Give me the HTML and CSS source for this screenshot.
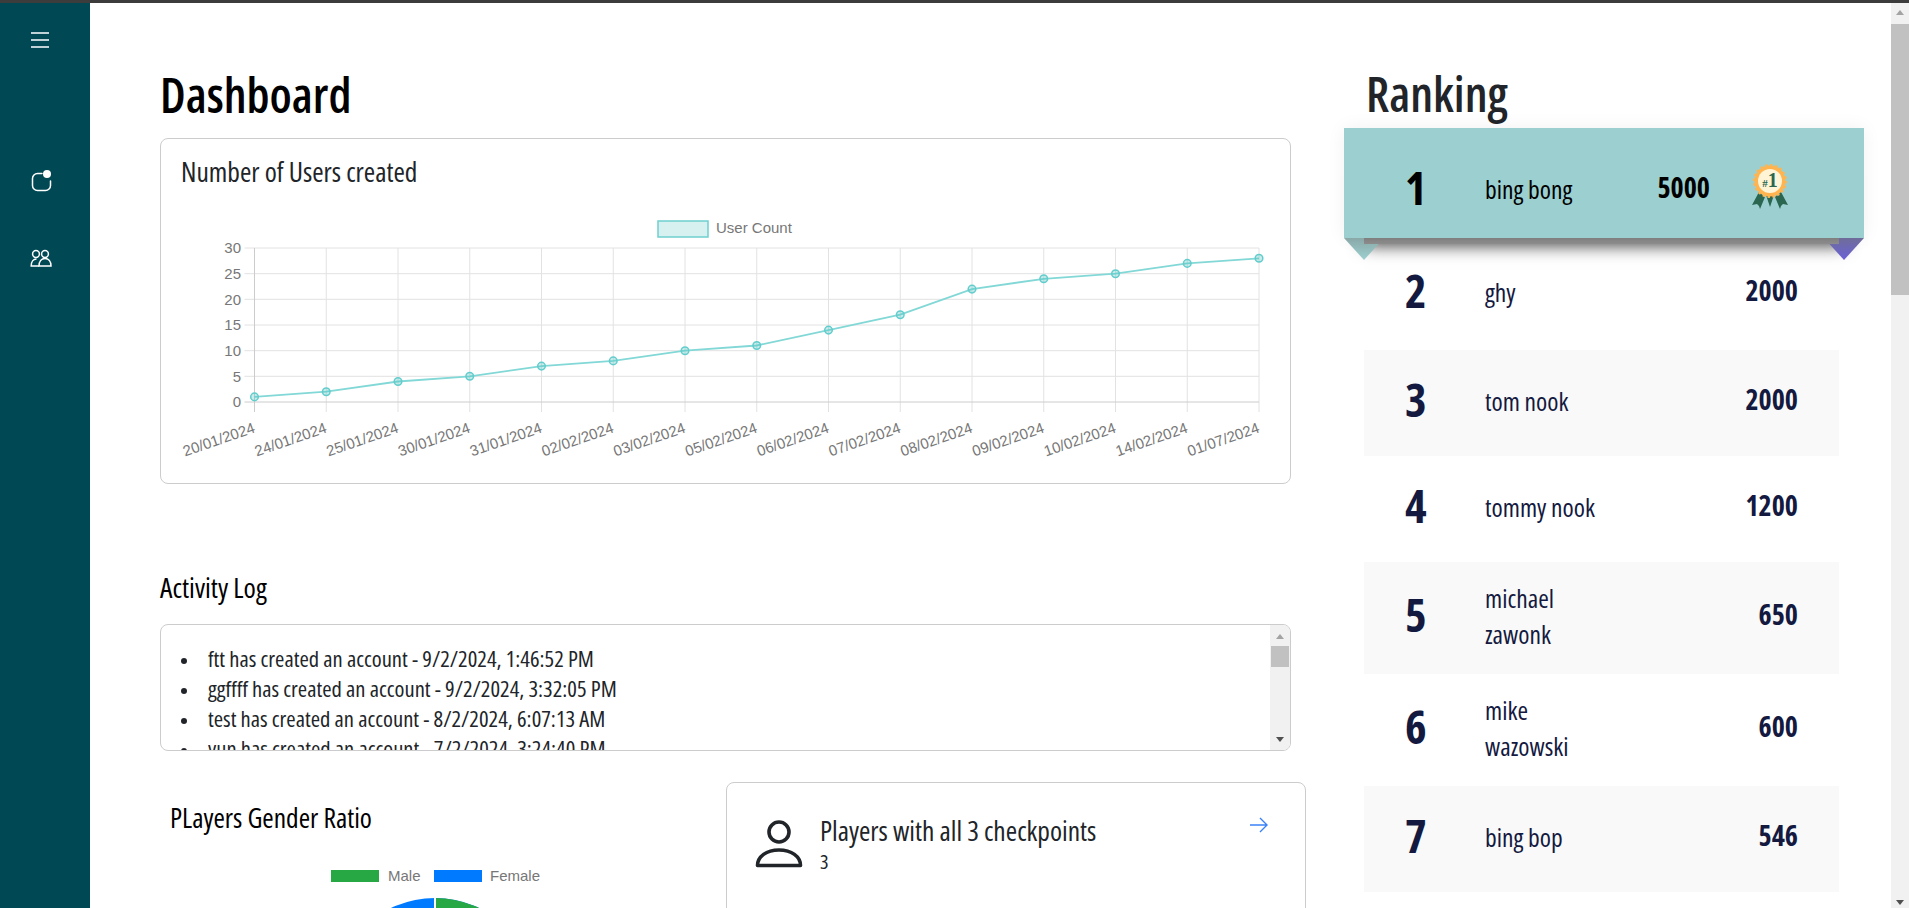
FILE: index.html
```html
<!DOCTYPE html>
<html>
<head>
<title>Dashboard</title>
<link rel="stylesheet" href="styles.css">
</head>
<body>
<div class="topline"></div>
<div class="app">
  <nav class="side">
    <a class="side-btn menu-btn" href="#">
      <svg width="18" height="16" viewBox="0 0 18 16"><path d="M0 1h18M0 8h18M0 15h18" stroke="#fff" stroke-width="1.6" stroke-linecap="round"/></svg>
    </a>
    <a class="side-btn notif-btn" href="#">
      <svg width="24" height="24" viewBox="0 0 24 24"><path d="M12 4.500H7.500a5 5 0 0 0-5 5v7a5 5 0 0 0 5 5h8a5 5 0 0 0 5-5V12" fill="none" stroke="#fff" stroke-width="1.5" stroke-linecap="round"/><circle cx="17" cy="5" r="4" fill="#fff"/></svg>
    </a>
    <a class="side-btn people-btn" href="#">
      <svg width="22" height="18" viewBox="0 0 22 18"><g fill="none" stroke="#fff" stroke-width="1.5"><circle cx="6" cy="5" r="3.400"/><circle cx="15" cy="5" r="3.400"/><path d="M9 17H1.200c0-4 2-7 5.300-7"/><path d="M9 17c0-4.500 2.500-7.500 6-7.500s6 3 6 7.500z"/></g></svg>
    </a>
  </nav>

  <main class="content">
    <section class="dash">
      <h1 class="dash-title">Dashboard</h1>

      <div class="card chart-card">
        <h3 class="card-title">Number of Users created</h3>
        <svg class="chart" width="1129" height="278" viewBox="161 205 1129 278">
          <g class="grid">
            <path d="M244.500 248H1259M244.500 273.700H1259M244.500 299.300H1259M244.500 325H1259M244.500 350.700H1259M244.500 376.300H1259"/>
            <path d="M326.250 248V412M398 248V412M469.750 248V412M541.500 248V412M613.250 248V412M685 248V412M756.750 248V412M828.500 248V412M900.250 248V412M972 248V412M1043.750 248V412M1115.500 248V412M1187.250 248V412M1259 248V412"/>
            <path class="axis" d="M254.500 248V412M244.500 402H1259"/>
          </g>
          <rect class="legend-box" x="658" y="221" width="50" height="16"/>
          <text class="lbl" x="716" y="233">User Count</text>
          <g class="lbl y-lbl">
            <text x="241" y="253">30</text>
            <text x="241" y="279">25</text>
            <text x="241" y="305">20</text>
            <text x="241" y="330">15</text>
            <text x="241" y="356">10</text>
            <text x="241" y="382">5</text>
            <text x="241" y="407">0</text>
          </g>
          <polyline class="line" points="254.500,396.900 326.250,391.700 398,381.500 469.750,376.300 541.500,366.100 613.250,360.900 685,350.700 756.750,345.500 828.500,330.100 900.250,314.700 972,289.100 1043.750,278.800 1115.500,273.700 1187.250,263.400 1259,258.300"/>
          <g class="pts">
            <circle cx="254.500" cy="396.900" r="3.800"/><circle cx="326.250" cy="391.700" r="3.800"/><circle cx="398" cy="381.500" r="3.800"/>
            <circle cx="469.750" cy="376.300" r="3.800"/><circle cx="541.500" cy="366.100" r="3.800"/><circle cx="613.250" cy="360.900" r="3.800"/>
            <circle cx="685" cy="350.700" r="3.800"/><circle cx="756.750" cy="345.500" r="3.800"/><circle cx="828.500" cy="330.100" r="3.800"/>
            <circle cx="900.250" cy="314.700" r="3.800"/><circle cx="972" cy="289.100" r="3.800"/><circle cx="1043.750" cy="278.800" r="3.800"/>
            <circle cx="1115.500" cy="273.700" r="3.800"/><circle cx="1187.250" cy="263.400" r="3.800"/><circle cx="1259" cy="258.300" r="3.800"/>
          </g>
          <g class="lbl x-lbl">
            <text transform="translate(256 432) rotate(-19)">20/01/2024</text>
            <text transform="translate(327.750 432) rotate(-19)">24/01/2024</text>
            <text transform="translate(399.500 432) rotate(-19)">25/01/2024</text>
            <text transform="translate(471.250 432) rotate(-19)">30/01/2024</text>
            <text transform="translate(543 432) rotate(-19)">31/01/2024</text>
            <text transform="translate(614.750 432) rotate(-19)">02/02/2024</text>
            <text transform="translate(686.500 432) rotate(-19)">03/02/2024</text>
            <text transform="translate(758.250 432) rotate(-19)">05/02/2024</text>
            <text transform="translate(830 432) rotate(-19)">06/02/2024</text>
            <text transform="translate(901.750 432) rotate(-19)">07/02/2024</text>
            <text transform="translate(973.500 432) rotate(-19)">08/02/2024</text>
            <text transform="translate(1045.250 432) rotate(-19)">09/02/2024</text>
            <text transform="translate(1117 432) rotate(-19)">10/02/2024</text>
            <text transform="translate(1188.750 432) rotate(-19)">14/02/2024</text>
            <text transform="translate(1260.500 432) rotate(-19)">01/07/2024</text>
          </g>
        </svg>
      </div>

      <h3 class="log-title">Activity Log</h3>
      <div class="card log">
        <ul class="log-list">
          <li>ftt has created an account - 9/2/2024, 1:46:52 PM</li>
          <li>ggffff has created an account - 9/2/2024, 3:32:05 PM</li>
          <li>test has created an account - 8/2/2024, 6:07:13 AM</li>
          <li>yun has created an account - 7/2/2024, 3:24:40 PM</li>
        </ul>
        <div class="bar log-bar">
          <span class="arrow up"></span>
          <span class="thumb"></span>
          <span class="arrow down"></span>
        </div>
      </div>

      <div class="stats">
        <div class="gender">
          <h3 class="card-title gender-title">PLayers Gender Ratio</h3>
          <svg class="pie" width="566" height="200" viewBox="160 860 566 200">
            <rect x="331" y="870" width="48" height="12" fill="#28a745"/>
            <text class="lbl" x="388" y="881">Male</text>
            <rect x="434" y="870" width="48" height="12" fill="#007bff"/>
            <text class="lbl" x="490" y="881">Female</text>
            <circle cx="435" cy="1000" r="102" fill="#007bff"/>
            <path d="M435 1000V898A102 102 0 0 1 537 1000z" fill="#28a745"/>
            <path d="M435 1000V896" stroke="#fff" stroke-width="2"/>
          </svg>
        </div>
        <div class="card check">
          <svg class="person" width="48" height="48" viewBox="0 0 48 48">
            <circle cx="24" cy="12" r="10" fill="none" stroke="#212529" stroke-width="3.600"/>
            <path d="M2.500 45.500c0-9 9-15.500 21.500-15.500s21.500 6.500 21.500 15.500z" fill="none" stroke="#212529" stroke-width="3.600" stroke-linejoin="round"/>
          </svg>
          <div class="check-text">
            <h3 class="card-title">Players with all 3 checkpoints</h3>
            <p>3</p>
          </div>
          <svg class="go" width="20" height="20" viewBox="0 0 20 20"><path d="M1 10h17M11 3l7 7-7 7" fill="none" stroke="#3b82f6" stroke-width="1.400"/></svg>
        </div>
      </div>
    </section>

    <section class="rank">
      <h1 class="rank-title">Ranking</h1>
      <div class="rank-row first">
        <span class="pos">1</span>
        <span class="name">bing bong</span>
        <span class="score">5000</span>
        <svg class="medal" width="38" height="46" viewBox="0 0 38 46">
          <path d="M8 28L1 41l5-1 2 2 1 3 5-12zM30 28l7 13-5-1-2 2-1 3-5-12zM15 31l4 12 4-12z" fill="#2a6650"/>
          <circle cx="19" cy="17" r="15.500" fill="#ffb44f"/>
          <circle cx="19" cy="17" r="16" fill="none" stroke="#ffb44f" stroke-width="2" stroke-dasharray="2.500 2.500"/>
          <circle cx="19" cy="17" r="12" fill="#fff5d6"/>
          <text class="medal-txt" x="19" y="23"><tspan class="medal-hash">#</tspan>1</text>
        </svg>
        <span class="fold"></span>
      </div>
      <div class="rank-row tall"><span class="pos">2</span><span class="name">ghy</span><span class="score">2000</span></div>
      <div class="rank-row"><span class="pos">3</span><span class="name">tom nook</span><span class="score">2000</span></div>
      <div class="rank-row"><span class="pos">4</span><span class="name">tommy nook</span><span class="score">1200</span></div>
      <div class="rank-row"><span class="pos">5</span><span class="name">michael<br>zawonk</span><span class="score">650</span></div>
      <div class="rank-row"><span class="pos">6</span><span class="name">mike<br>wazowski</span><span class="score">600</span></div>
      <div class="rank-row"><span class="pos">7</span><span class="name">bing bop</span><span class="score">546</span></div>
    </section>
  </main>

  <div class="bar page-bar">
    <span class="arrow up"></span>
    <span class="thumb"></span>
    <span class="arrow down"></span>
  </div>
</div>
</body>
</html>
```
FILE: styles.css
```css
html, body {margin:0; height:100%; overflow:hidden; background:#fff;}
body {font-family:"Open Sans","Liberation Sans",Arial,sans-serif; font-stretch:75%; color:#212529; display:flex; flex-direction:column;}
h1, h3, p {margin:0;}

.topline {height:3px; background:#3c3c3c; flex:none;}
.app {flex:1; display:flex; min-height:0;}

/* sidebar */
.side {width:90px; flex:none; background:#004854; display:flex; flex-direction:column; align-items:center; padding:29px 10px 0 0; box-sizing:border-box;}
.side-btn {display:flex; justify-content:center; width:24px;}
.menu-btn {height:16px;}
.notif-btn {margin:121px 0 56px 3px;}
.people-btn {margin-left:2px;}

.content {flex:1; display:flex; min-width:0; overflow:hidden;}

/* left column */
.dash {width:1131px; flex:none; margin-left:70px; padding-top:62px;}
.dash-title {font-size:48px; line-height:60px; font-weight:600; color:#000; margin-bottom:13px;}
.card {border:1px solid #ccc; border-radius:8px; background:#fff; box-sizing:border-box;}
.card-title {font-size:27.500px; line-height:36px; font-weight:normal;}
.chart-card {height:346px;}
.chart-card .card-title {padding:15px 20px;}
.chart {display:block;}
.grid path {fill:none; stroke:#e2e2e2; stroke-width:1;}
.grid .axis {stroke:#ccc;}
.legend-box {fill:rgba(75,192,192,.22); stroke:#6fcfcf; stroke-width:1.500;}
.lbl {font-family:"Liberation Sans",Arial,sans-serif; font-stretch:normal; font-size:15px; fill:#777;}
.y-lbl text, .x-lbl text {text-anchor:end;}
.line {fill:none; stroke:#82d8d6; stroke-width:1.800;}
.pts circle {fill:rgba(75,192,192,.3); stroke:#62cdcd; stroke-width:1.500;}

.log-title {font-size:28px; line-height:36px; font-weight:normal; margin-top:85px; margin-bottom:19px; color:#000;}
.log {height:127px; display:flex; overflow:hidden;}
.log-list {flex:1; margin:0; padding:19px 0 0 47px; font-size:22.600px; line-height:30px; overflow:hidden; height:100%; box-sizing:border-box; list-style:none;}
.log-list li::before {content:""; display:inline-block; width:6px; height:6px; border-radius:50%; background:#212529; margin:0 21px 0 -27px; vertical-align:middle;}

/* scrollbars are drawn, the real ones don't show in the shot */
.bar {background:#f1f1f1; display:flex; flex-direction:column; align-items:center; flex:none; box-sizing:border-box;}
.thumb {background:#c1c1c1; width:100%; display:block;}
.arrow {width:0; height:0; border-left:4px solid transparent; border-right:4px solid transparent; display:block;}
.arrow.up {border-bottom:5px solid #a3a3a3;}
.arrow.down {border-top:5px solid #505050; margin-top:auto;}
.log-bar {width:20px; padding:9px 1px 8px;}
.log-bar .thumb {height:21px; margin-top:7px;}
.page-bar {width:18px; padding:7px 0 3px;}
.page-bar .thumb {height:271px; margin-top:9px;}

/* gender + checkpoints */
.stats {display:flex; width:1146px; margin-top:31px;}
.gender {width:566px; flex:none; padding-top:18px; box-sizing:border-box;}
.gender-title {padding-left:10px; color:#000;}
.pie {display:block; margin-top:24px;}
.check {flex:1; height:220px; display:flex; align-items:flex-start; padding:37px 36px 0 28px;}
.person {flex:none;}
.check-text {flex:1; margin-left:17px; margin-top:-7px;}
.check-text p {font-size:20px; line-height:30px; margin-top:-2px;}
.go {flex:none; margin-top:-5px;}

/* ranking */
.rank {width:475px; flex:none; margin-left:73px; padding-top:62px;}
.rank-title {font-size:48px; line-height:60px; font-weight:600; padding-left:2px; margin:-1px 0 4px;}
.rank-row {display:grid; grid-template-columns:80px 1fr auto; align-items:center; min-height:106px; padding:14px 41px 22px; box-sizing:border-box; color:#14193f;}
.rank-row:nth-of-type(odd) {background:#f9f9f9;}
.rank-row:nth-of-type(2n) {background:#fff;}
.tall {min-height:112px;}
.pos {font-size:46px; line-height:46px; font-weight:bold;}
.name {font-size:25.500px; line-height:36px; margin-top:4px;}
.score {font-size:28px; line-height:36px; font-weight:bold;}

.first {position:relative; z-index:1; height:110px; min-height:110px; margin:0 -25px 0 -20px; padding:8px 75px 0 61px; background:#9cd0d0 !important; color:#000; box-shadow:0 28px 16px -20px rgba(0,0,0,.7), 0 0 18px rgba(0,0,0,.06); grid-template-columns:80px 1fr auto auto;}
.first::before, .first::after {content:""; position:absolute; top:100%; width:40px; height:22px; clip-path:polygon(0 0,100% 0,50% 100%);}
.first::before {left:0; background:linear-gradient(#8aa8a8,#9dd0d0);}
.first::after {right:0; background:linear-gradient(#6f6d99,#6a62d8);}
.fold {position:absolute; z-index:1; top:100%; left:20px; right:25px; height:6px; background:linear-gradient(#7f7f7f,#8c8c8c);}
.medal {margin-left:41px;}
.medal-txt {font-family:"Liberation Serif",serif; font-stretch:normal; font-size:20px; font-weight:bold; fill:#2a6650; text-anchor:middle;}
.medal-hash {font-size:11px;}
```
